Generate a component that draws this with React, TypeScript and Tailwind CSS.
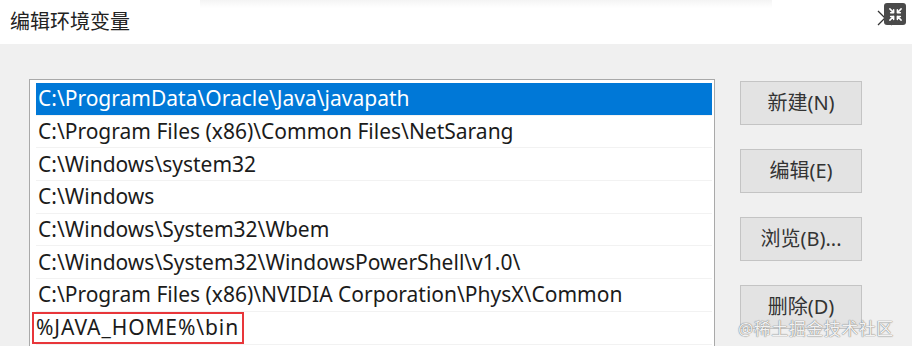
import { Shrink } from "lucide-react";

const paths = [
  "C:\\ProgramData\\Oracle\\Java\\javapath",
  "C:\\Program Files (x86)\\Common Files\\NetSarang",
  "C:\\Windows\\system32",
  "C:\\Windows",
  "C:\\Windows\\System32\\Wbem",
  "C:\\Windows\\System32\\WindowsPowerShell\\v1.0\\",
  "C:\\Program Files (x86)\\NVIDIA Corporation\\PhysX\\Common",
  "%JAVA_HOME%\\bin",
];

const buttons = ["新建(N)", "编辑(E)", "浏览(B)...", "删除(D)"];

export default function App() {
  return (
    <div
      className="relative w-[912px] h-[346px] overflow-hidden bg-[#f0f0f0] text-[#1b1b1b]"
      style={{ fontFamily: '"Noto Sans", "Noto Sans CJK SC", sans-serif' }}
    >
      {/* title bar */}
      <div className="relative h-[44px] bg-white flex items-center pl-[10px]">
        <div className="absolute left-[200px] right-[140px] top-0 h-[8px] bg-gradient-to-b from-[#f4f4f4] to-white" />
        <span className="relative text-[20px] leading-none text-[#222]">编辑环境变量</span>
        <div className="absolute right-[18px] top-[9px] w-[18px] h-[18px]">
          <svg viewBox="0 0 18 18" className="w-full h-full">
            <path d="M2 2 L16 16 M16 2 L2 16" stroke="#333" strokeWidth="1.3" />
          </svg>
        </div>
        <div className="absolute right-[6px] top-[3px] w-[22px] h-[22px] rounded-[3px] bg-[#4a4a4a] flex items-center justify-center">
          <Shrink size={15} color="white" strokeWidth={2.4} />
        </div>
      </div>

      <div className="flex pt-[35px]">
        {/* list box */}
        <div className="ml-[29px] w-[686px] h-[300px] bg-white border border-[#a9a9a9] pt-[3px] pl-[6px] pr-[2px]">
          {paths.map((p, i) => (
            <div
              key={i}
              className={
                "h-[32.7px] flex items-center text-[21px] leading-none whitespace-nowrap border-b border-[#f2f2f2] " +
                (i === 0 ? "bg-[#0078d7] text-white" : "")
              }
            >
              {i === 7 ? (
                <span className="-ml-[4px] w-[212px] pl-[2px] h-[32px] flex items-center border-2 border-[#e8363a] tracking-[0.9px]">
                  {p}
                </span>
              ) : (
                <span className="pl-[2px]">{p}</span>
              )}
            </div>
          ))}
        </div>

        {/* buttons */}
        <div className="ml-[25px] flex flex-col gap-[24px] pt-[2px]">
          {buttons.map(b => (
            <div
              key={b}
              className="w-[122px] h-[44px] bg-[#e3e3e3] border border-[#c4c4c4] flex items-center justify-center text-[20px] text-[#333]"
            >
              {b}
            </div>
          ))}
        </div>
      </div>

      {/* watermark */}
      <div
        className="absolute left-[738px] top-[316px] text-[17px] text-white/90 tracking-[0.5px]"
        style={{ textShadow: "0 0 1px #777, 0 0 1px #777" }}
      >
        @稀土掘金技术社区
      </div>
    </div>
  );
}
